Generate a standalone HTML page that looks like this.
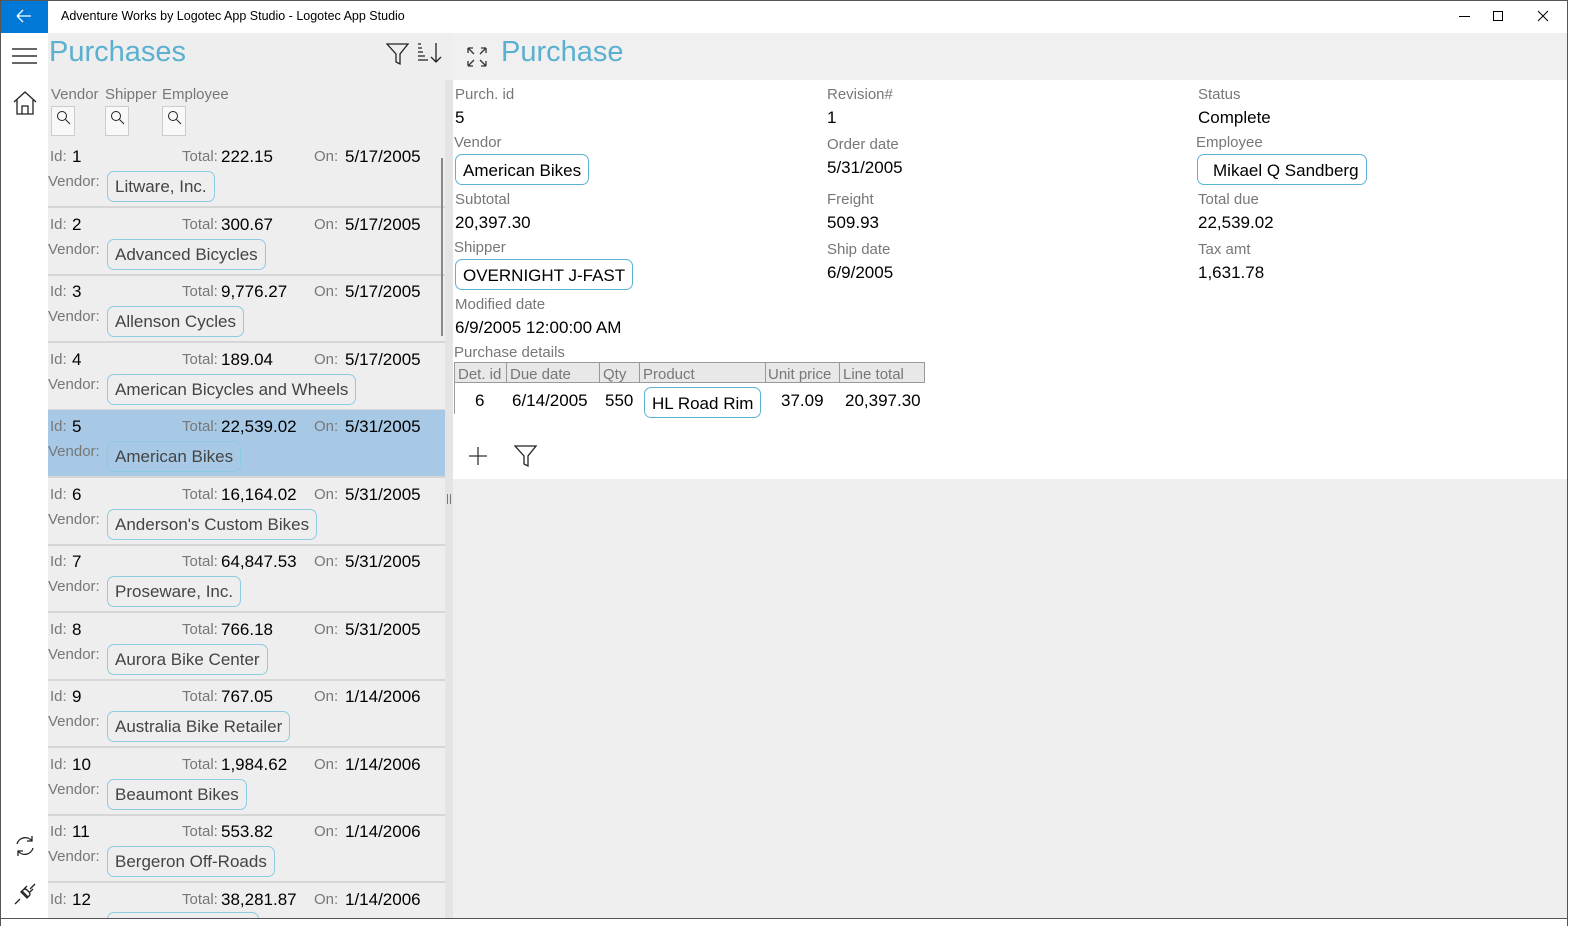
<!DOCTYPE html>
<html><head><meta charset="utf-8"><style>
*{margin:0;padding:0;box-sizing:border-box}
body{width:1580px;height:926px;position:relative;overflow:hidden;background:#fff;font-family:"Liberation Sans",sans-serif;color:#000}
.a{position:absolute;white-space:nowrap}
.l{font-size:15px;color:#777}
.v{font-size:17px;color:#000}
.btn{position:absolute;border:1px solid #8fcbe0;border-radius:7px;font-size:17px;color:#444;padding:0 7px;height:31px;line-height:30px;white-space:nowrap}
.btnw{position:absolute;border:1px solid #5bb3d3;border-radius:7px;font-size:17px;color:#000;padding:0 7px;height:31px;line-height:31px;white-space:nowrap;background:#fff}
.row{position:absolute;left:48px;width:397px;height:68px;border-bottom:2px solid #d6d6d6}
.sb{position:absolute;width:24px;height:30px;border:1px solid #ccc;background:#f8f8f8;top:106px}
</style></head><body>
<!-- title bar -->
<div class="a" style="left:0;top:0;width:48px;height:33px;background:#0078d7"></div>
<svg class="a" style="left:16px;top:9px" width="16" height="14"><path d="M1 7H15M1 7L7 1M1 7L7 13" stroke="#fff" stroke-width="1.3" fill="none"/></svg>
<div class="a" style="left:61px;top:9px;font-size:12.5px">Adventure Works by Logotec App Studio - Logotec App Studio</div>
<div class="a" style="left:1459px;top:16px;width:11px;height:1px;background:#000"></div>
<div class="a" style="left:1493px;top:11px;width:10px;height:10px;border:1px solid #000"></div>
<svg class="a" style="left:1537px;top:10px" width="12" height="12"><path d="M1 1L11 11M11 1L1 11" stroke="#000" stroke-width="1"/></svg>
<!-- window border -->
<div class="a" style="left:0;top:0;width:1px;height:926px;background:#555"></div>
<div class="a" style="left:1567px;top:0;width:1px;height:926px;background:#555"></div>
<div class="a" style="left:0;top:918px;width:1568px;height:1px;background:#555"></div>
<div class="a" style="left:0;top:0;width:1568px;height:1px;background:#555"></div>
<!-- left nav -->
<svg class="a" style="left:12px;top:47px" width="26" height="20"><path d="M0 2H25M0 9H25M0 16H25" stroke="#333" stroke-width="1.4"/></svg>
<svg class="a" style="left:12px;top:90px" width="26" height="26"><path d="M2 12L13 2L24 12M5 10V24H21V10M10 24V16H16V24" stroke="#222" stroke-width="1.3" fill="none"/></svg>
<svg class="a" style="left:13px;top:834px" width="24" height="24"><path d="M4 10A8.5 8.5 0 0 1 19 7M20 14A8.5 8.5 0 0 1 5 17M19 2V7H14M5 22V17H10" stroke="#222" stroke-width="1.3" fill="none"/></svg>
<svg class="a" style="left:13px;top:882px" width="24" height="24"><path d="M2 22L7 17M22 2L17 7M9 9L15 15M8 10L14 16L16 14Q18 12 16 10L14 8Q12 6 10 8ZM11 7L14 4M17 10L20 7" stroke="#222" stroke-width="1.3" fill="none"/></svg>
<!-- list pane -->
<div class="a" style="left:48px;top:33px;width:405px;height:885px;background:#eeeeee"></div>
<div class="a" style="left:49px;top:36px;font-size:29px;color:#5bb0d0">Purchases</div>
<svg class="a" style="left:386px;top:42px" width="24" height="24"><path d="M1 2H22L14 12V22L10 20V12Z" stroke="#222" stroke-width="1.3" fill="none"/></svg>
<svg class="a" style="left:417px;top:42px" width="26" height="22"><path d="M1 2H4M1 6H5M1 10H6M1 14H8M1 18H11M19 1V20M14 15L19 20L24 15" stroke="#222" stroke-width="1.3" fill="none"/></svg>
<div class="a l" style="left:51px;top:86px">Vendor</div>
<div class="a l" style="left:105px;top:86px">Shipper</div>
<div class="a l" style="left:162px;top:86px">Employee</div>
<div class="sb" style="left:51px"></div><div class="sb" style="left:105px"></div><div class="sb" style="left:162px"></div>
<svg class="a" style="left:55px;top:109px" width="18" height="18"><circle cx="7" cy="7" r="4.5" stroke="#222" fill="none"/><path d="M10.5 10.5L15 15" stroke="#222"/></svg>
<svg class="a" style="left:109px;top:109px" width="18" height="18"><circle cx="7" cy="7" r="4.5" stroke="#222" fill="none"/><path d="M10.5 10.5L15 15" stroke="#222"/></svg>
<svg class="a" style="left:166px;top:109px" width="18" height="18"><circle cx="7" cy="7" r="4.5" stroke="#222" fill="none"/><path d="M10.5 10.5L15 15" stroke="#222"/></svg>

<div class="row" style="top:140px"><span class="a l" style="left:2px;top:8px">Id:</span><span class="a v" style="left:24px;top:7px">1</span><span class="a l" style="left:134px;top:8px">Total:</span><span class="a v" style="left:173px;top:7px">222.15</span><span class="a l" style="left:266px;top:8px">On:</span><span class="a v" style="left:297px;top:7px">5/17/2005</span><span class="a l" style="left:0;top:33px">Vendor:</span><span class="btn" style="left:59px;top:31px">Litware, Inc.</span></div>
<div class="row" style="top:208px"><span class="a l" style="left:2px;top:8px">Id:</span><span class="a v" style="left:24px;top:7px">2</span><span class="a l" style="left:134px;top:8px">Total:</span><span class="a v" style="left:173px;top:7px">300.67</span><span class="a l" style="left:266px;top:8px">On:</span><span class="a v" style="left:297px;top:7px">5/17/2005</span><span class="a l" style="left:0;top:33px">Vendor:</span><span class="btn" style="left:59px;top:31px">Advanced Bicycles</span></div>
<div class="row" style="top:275px"><span class="a l" style="left:2px;top:8px">Id:</span><span class="a v" style="left:24px;top:7px">3</span><span class="a l" style="left:134px;top:8px">Total:</span><span class="a v" style="left:173px;top:7px">9,776.27</span><span class="a l" style="left:266px;top:8px">On:</span><span class="a v" style="left:297px;top:7px">5/17/2005</span><span class="a l" style="left:0;top:33px">Vendor:</span><span class="btn" style="left:59px;top:31px">Allenson Cycles</span></div>
<div class="row" style="top:343px"><span class="a l" style="left:2px;top:8px">Id:</span><span class="a v" style="left:24px;top:7px">4</span><span class="a l" style="left:134px;top:8px">Total:</span><span class="a v" style="left:173px;top:7px">189.04</span><span class="a l" style="left:266px;top:8px">On:</span><span class="a v" style="left:297px;top:7px">5/17/2005</span><span class="a l" style="left:0;top:33px">Vendor:</span><span class="btn" style="left:59px;top:31px">American Bicycles and Wheels</span></div>
<div class="row" style="top:410px;background:#a7c9e6"><span class="a l" style="left:2px;top:8px">Id:</span><span class="a v" style="left:24px;top:7px">5</span><span class="a l" style="left:134px;top:8px">Total:</span><span class="a v" style="left:173px;top:7px">22,539.02</span><span class="a l" style="left:266px;top:8px">On:</span><span class="a v" style="left:297px;top:7px">5/31/2005</span><span class="a l" style="left:0;top:33px">Vendor:</span><span class="btn" style="left:59px;top:31px">American Bikes</span></div>
<div class="row" style="top:478px"><span class="a l" style="left:2px;top:8px">Id:</span><span class="a v" style="left:24px;top:7px">6</span><span class="a l" style="left:134px;top:8px">Total:</span><span class="a v" style="left:173px;top:7px">16,164.02</span><span class="a l" style="left:266px;top:8px">On:</span><span class="a v" style="left:297px;top:7px">5/31/2005</span><span class="a l" style="left:0;top:33px">Vendor:</span><span class="btn" style="left:59px;top:31px">Anderson's Custom Bikes</span></div>
<div class="row" style="top:545px"><span class="a l" style="left:2px;top:8px">Id:</span><span class="a v" style="left:24px;top:7px">7</span><span class="a l" style="left:134px;top:8px">Total:</span><span class="a v" style="left:173px;top:7px">64,847.53</span><span class="a l" style="left:266px;top:8px">On:</span><span class="a v" style="left:297px;top:7px">5/31/2005</span><span class="a l" style="left:0;top:33px">Vendor:</span><span class="btn" style="left:59px;top:31px">Proseware, Inc.</span></div>
<div class="row" style="top:613px"><span class="a l" style="left:2px;top:8px">Id:</span><span class="a v" style="left:24px;top:7px">8</span><span class="a l" style="left:134px;top:8px">Total:</span><span class="a v" style="left:173px;top:7px">766.18</span><span class="a l" style="left:266px;top:8px">On:</span><span class="a v" style="left:297px;top:7px">5/31/2005</span><span class="a l" style="left:0;top:33px">Vendor:</span><span class="btn" style="left:59px;top:31px">Aurora Bike Center</span></div>
<div class="row" style="top:680px"><span class="a l" style="left:2px;top:8px">Id:</span><span class="a v" style="left:24px;top:7px">9</span><span class="a l" style="left:134px;top:8px">Total:</span><span class="a v" style="left:173px;top:7px">767.05</span><span class="a l" style="left:266px;top:8px">On:</span><span class="a v" style="left:297px;top:7px">1/14/2006</span><span class="a l" style="left:0;top:33px">Vendor:</span><span class="btn" style="left:59px;top:31px">Australia Bike Retailer</span></div>
<div class="row" style="top:748px"><span class="a l" style="left:2px;top:8px">Id:</span><span class="a v" style="left:24px;top:7px">10</span><span class="a l" style="left:134px;top:8px">Total:</span><span class="a v" style="left:173px;top:7px">1,984.62</span><span class="a l" style="left:266px;top:8px">On:</span><span class="a v" style="left:297px;top:7px">1/14/2006</span><span class="a l" style="left:0;top:33px">Vendor:</span><span class="btn" style="left:59px;top:31px">Beaumont Bikes</span></div>
<div class="row" style="top:815px"><span class="a l" style="left:2px;top:8px">Id:</span><span class="a v" style="left:24px;top:7px">11</span><span class="a l" style="left:134px;top:8px">Total:</span><span class="a v" style="left:173px;top:7px">553.82</span><span class="a l" style="left:266px;top:8px">On:</span><span class="a v" style="left:297px;top:7px">1/14/2006</span><span class="a l" style="left:0;top:33px">Vendor:</span><span class="btn" style="left:59px;top:31px">Bergeron Off-Roads</span></div>
<div class="row" style="top:883px;border:none;height:35px;overflow:hidden"><span class="a l" style="left:2px;top:8px">Id:</span><span class="a v" style="left:24px;top:7px">12</span><span class="a l" style="left:134px;top:8px">Total:</span><span class="a v" style="left:173px;top:7px">38,281.87</span><span class="a l" style="left:266px;top:8px">On:</span><span class="a v" style="left:297px;top:7px">1/14/2006</span><span class="btn" style="left:59px;top:29px;width:152px"></span></div>
<!-- scrollbar & splitter -->
<div class="a" style="left:441px;top:158px;width:2px;height:178px;background:#888"></div>
<div class="a" style="left:445px;top:80px;width:8px;height:838px;background:#e4e4e4"></div>
<div class="a" style="left:447px;top:494px;width:1px;height:10px;background:#777"></div>
<div class="a" style="left:450px;top:494px;width:1px;height:10px;background:#777"></div>
<!-- right pane -->
<div class="a" style="left:453px;top:33px;width:1114px;height:47px;background:#f0f0f0"></div>
<div class="a" style="left:453px;top:479px;width:1114px;height:439px;background:#efefef"></div>
<svg class="a" style="left:466px;top:46px" width="22" height="22"><path d="M2 2L8 8M2 2V7M2 2H7M20 2L14 8M20 2V7M20 2H15M2 20L8 14M2 20V15M2 20H7M20 20L14 14M20 20V15M20 20H15" stroke="#333" stroke-width="1.3" fill="none"/></svg>
<div class="a" style="left:501px;top:36px;font-size:29px;color:#5bb0d0">Purchase</div>

<div class="a l" style="left:455px;top:86px">Purch. id</div><div class="a v" style="left:455px;top:108px">5</div>
<div class="a l" style="left:454px;top:134px">Vendor</div><div class="btnw" style="left:455px;top:154px">American Bikes</div>
<div class="a l" style="left:455px;top:191px">Subtotal</div><div class="a v" style="left:455px;top:213px">20,397.30</div>
<div class="a l" style="left:454px;top:239px">Shipper</div><div class="btnw" style="left:455px;top:259px">OVERNIGHT J-FAST</div>
<div class="a l" style="left:455px;top:296px">Modified date</div><div class="a v" style="left:455px;top:318px">6/9/2005 12:00:00 AM</div>

<div class="a l" style="left:827px;top:86px">Revision#</div><div class="a v" style="left:827px;top:108px">1</div>
<div class="a l" style="left:827px;top:136px">Order date</div><div class="a v" style="left:827px;top:158px">5/31/2005</div>
<div class="a l" style="left:827px;top:191px">Freight</div><div class="a v" style="left:827px;top:213px">509.93</div>
<div class="a l" style="left:827px;top:241px">Ship date</div><div class="a v" style="left:827px;top:263px">6/9/2005</div>

<div class="a l" style="left:1198px;top:86px">Status</div><div class="a v" style="left:1198px;top:108px">Complete</div>
<div class="a l" style="left:1196px;top:134px">Employee</div><div class="btnw" style="left:1197px;top:154px;padding:0 7px 0 15px">Mikael Q Sandberg</div>
<div class="a l" style="left:1198px;top:191px">Total due</div><div class="a v" style="left:1198px;top:213px">22,539.02</div>
<div class="a l" style="left:1198px;top:241px">Tax amt</div><div class="a v" style="left:1198px;top:263px">1,631.78</div>

<div class="a l" style="left:454px;top:344px">Purchase details</div>
<div class="a" style="left:454px;top:362px;width:471px;height:21px;background:#e8e8e8;border:1px solid #999"></div>
<div class="a" style="left:454px;top:383px;width:1px;height:31px;background:#999"></div>
<div class="a l" style="left:458px;top:366px">Det. id</div>
<div class="a" style="left:506px;top:363px;width:1px;height:20px;background:#999"></div>
<div class="a l" style="left:510px;top:366px">Due date</div>
<div class="a" style="left:599px;top:363px;width:1px;height:20px;background:#999"></div>
<div class="a l" style="left:603px;top:366px">Qty</div>
<div class="a" style="left:639px;top:363px;width:1px;height:20px;background:#999"></div>
<div class="a l" style="left:643px;top:366px">Product</div>
<div class="a" style="left:765px;top:363px;width:1px;height:20px;background:#999"></div>
<div class="a l" style="left:768px;top:366px">Unit price</div>
<div class="a" style="left:839px;top:363px;width:1px;height:20px;background:#999"></div>
<div class="a l" style="left:843px;top:366px">Line total</div>
<div class="a v" style="left:475px;top:391px">6</div>
<div class="a v" style="left:512px;top:391px">6/14/2005</div>
<div class="a v" style="left:605px;top:391px">550</div>
<div class="btnw" style="left:644px;top:387px">HL Road Rim</div>
<div class="a v" style="left:781px;top:391px">37.09</div>
<div class="a v" style="left:845px;top:391px">20,397.30</div>
<svg class="a" style="left:468px;top:446px" width="20" height="20"><path d="M10 1V19M1 10H19" stroke="#333" stroke-width="1.3"/></svg>
<svg class="a" style="left:514px;top:444px" width="24" height="24"><path d="M1 2H22L14 12V22L10 20V12Z" stroke="#222" stroke-width="1.3" fill="none"/></svg>
</body></html>
